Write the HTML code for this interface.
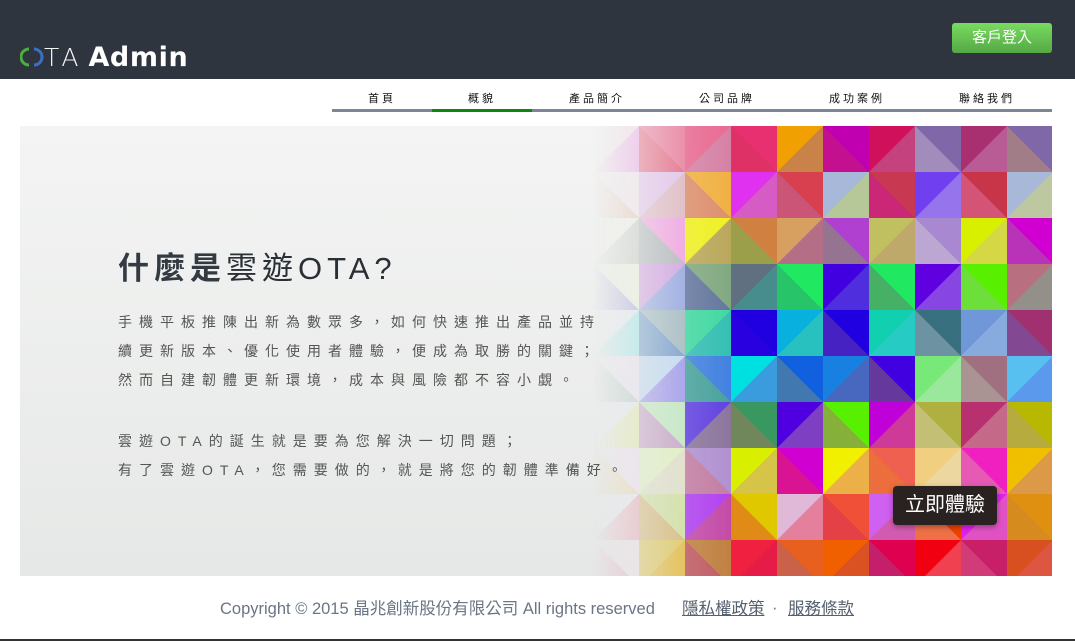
<!DOCTYPE html>
<html><head><meta charset="utf-8"><style>
*{margin:0;padding:0;box-sizing:border-box}
body{width:1075px;height:641px;background:#fff;font-family:"Liberation Sans","Noto Sans CJK TC",sans-serif;position:relative;overflow:hidden}
.hdr{position:absolute;left:0;top:0;width:1075px;height:79px;background:#2f353f}
.logo{position:absolute;left:20px;top:44px;height:28px;color:#fff;line-height:28px;white-space:nowrap}
.logo .ta{font-weight:300;letter-spacing:4px;color:#f4f4f4;font-family:"DejaVu Sans","Liberation Sans",sans-serif;font-size:25px}
.logo b{font-weight:bold;margin-left:6px;font-size:27px;letter-spacing:.6px;font-family:"DejaVu Sans","Liberation Sans",sans-serif}
.login{position:absolute;left:952px;top:23px;width:100px;height:30px;border-radius:3px;background:linear-gradient(#78dc60,#55a845);color:#fff;font-size:15px;text-align:center;line-height:30px}
.nav{position:absolute;left:332px;top:85px;width:720px;height:28px}
.nav div{position:absolute;top:5px;font-size:11px;letter-spacing:3px;color:#111;text-align:center}
.bar{position:absolute;left:332px;top:109px;width:720px;height:3px;background:#7a8798}
.bar i{position:absolute;left:100px;top:0;width:100px;height:3px;background:#0a8a0a}
.hero{position:absolute;left:20px;top:126px;width:1032px;height:450px;background:linear-gradient(180deg,#f3f4f3,#e6e8e7);overflow:hidden}
.mos{position:absolute;left:573px;top:0;-webkit-mask-image:linear-gradient(90deg,rgba(0,0,0,0) 0px,rgba(0,0,0,.45) 45px,rgba(0,0,0,.85) 95px,#000 140px);mask-image:linear-gradient(90deg,rgba(0,0,0,0) 0px,rgba(0,0,0,.45) 45px,rgba(0,0,0,.85) 95px,#000 140px)}
h1{position:absolute;left:98px;top:117px;font-size:31px;font-weight:normal;color:#2a2f36;letter-spacing:5px;white-space:nowrap}
h1 b{font-weight:bold;color:#333a42}
.p{position:absolute;left:98px;font-size:14px;letter-spacing:7px;color:#555;white-space:nowrap;line-height:29px}
.btn{position:absolute;left:873px;top:360px;width:104px;height:39px;border-radius:4px;background:#2a2220;color:#fff;font-size:20px;text-align:center;line-height:39px;box-shadow:0 2px 6px rgba(0,0,0,.35)}
.foot{position:absolute;top:595px;font-size:16.5px;color:#6a7585;white-space:nowrap}
.foot u{color:#55606e}
.bl{position:absolute;left:0;top:639px;width:1075px;height:2px;background:#333}
</style></head><body>
<div class="hdr">
 <div class="logo"><svg width="24" height="22" viewBox="0 0 24 22" style="vertical-align:-2px"><path d="M9 3 A8 8 0 0 0 9 19" fill="none" stroke="#4caf3c" stroke-width="3"/><path d="M14 3 A8 8 0 0 1 14 19" fill="none" stroke="#3b6fc4" stroke-width="3"/></svg><span class="ta">TA</span><b>Admin</b></div>
 <div class="login">客戶登入</div>
</div>
<div class="nav">
 <div style="left:0;width:100px">首頁</div>
 <div style="left:100px;width:100px">概貌</div>
 <div style="left:200px;width:130px">產品簡介</div>
 <div style="left:330px;width:130px">公司品牌</div>
 <div style="left:460px;width:130px">成功案例</div>
 <div style="left:590px;width:130px">聯絡我們</div>
</div>
<div class="bar"><i></i></div>
<div class="hero">
<svg class="mos" width="460" height="450" id="m"></svg>
<h1><b>什麼是</b>雲遊OTA?</h1>
<div class="p" style="top:182px">手機平板推陳出新為數眾多，如何快速推出產品並持<br>續更新版本、優化使用者體驗，便成為取勝的關鍵；<br>然而自建韌體更新環境，成本與風險都不容小覷。</div>
<div class="p" style="top:301px">雲遊OTA的誕生就是要為您解決一切問題；<br>有了雲遊OTA，您需要做的，就是將您的韌體準備好。</div>
<div class="btn">立即體驗</div>
</div>
<div class="foot" style="left:220px">Copyright © 2015 晶兆創新股份有限公司 All rights reserved</div>
<div class="foot" style="left:682px"><u>隱私權政策</u></div>
<div class="foot" style="left:772px;top:599px">·</div>
<div class="foot" style="left:788px"><u>服務條款</u></div>
<div class="bl"></div>
<script>
var C=[
["f0d8e0","e87a9a","e86890","e83070","f0a000","c000b0","d0105a","8068a8","a83070","8068a8"],
["f0e0e8","e0c0e8","f0b040","e030f0","d84050","a8b8d8","c83850","7040f0","c83448","a8b8d8"],
["f0f0e0","f0a0e0","f0f020","d08040","d8a060","b040d0","c0c060","a888d0","d8f000","d000d0"],
["e8f0d8","d0a0e0","80a880","607080","20e860","4000e0","20e860","6000e0","58f000","b87080"],
["e0e8f0","a0b8c0","40d8a0","2000e0","08b0e0","2000e0","10d0b0","387080","7098d8","a03070"],
["e8e0f0","c0d8f0","4080e0","00e0e0","1060e0","1880e0","4000e0","78e878","a07080","58c0f0"],
["e8e8f0","c0e8c0","6040e0","389860","5000e0","58f000","c000d8","b0b040","b83070","b8b800"],
["f0e0f0","e0f0c0","b090d0","d8f000","d000d0","f0f000","f06050","f0d080","f020c0","f0c000"],
["e8e8f0","d0e0a0","b040f0","e0c800","e0b8d8","f05038","d060f0","f04000","e020f0","e09010"],
["f0e0e8","e0c860","c08040","f02040","e86020","f06000","e00050","f00010","c82068","d85020"]];
var s="";for(var r=0;r<10;r++)for(var c=0;c<10;c++){var x=c*46,y=r*46;s+='<rect x="'+x+'" y="'+y+'" width="46" height="46" fill="#'+C[r][c]+'"/>';
var n=C[(r+1)%10][(c+3)%10];s+='<polygon points="'+((r+c)%2?(x+','+y+' '+(x+46)+','+(y+46)+' '+x+','+(y+46)):(x+46+','+y+' '+(x+46)+','+(y+46)+' '+x+','+(y+46)))+'" fill="#'+n+'" opacity=".3"/>';}
document.getElementById('m').innerHTML=s;
</script>
</body></html>
